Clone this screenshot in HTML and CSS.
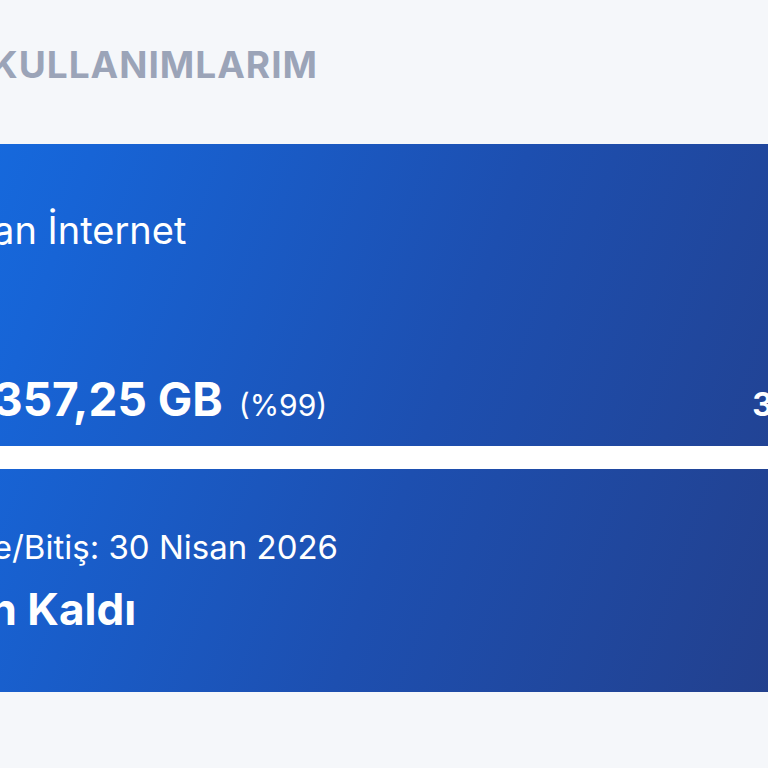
FILE: index.html
```html
<!DOCTYPE html>
<html lang="tr">
<head>
  <meta charset="UTF-8">
  <meta name="viewport" content="width=device-width, initial-scale=1.0">
  <title>Kullanımlarım</title>
  <link rel="stylesheet" href="styles.css">
</head>
<body>

  <div class="page">
    <h2 class="section-title">PAKET KULLANIMLARIM</h2>

    <div class="usage-card">
      <div class="usage-head">
        <span class="usage-icon"></span>
        <span class="usage-name">Kalan İnternet</span>
      </div>

      <div class="usage-amounts">
        <span class="amount-left">357,25 GB</span>
        <span class="amount-percent">(%99)</span>
        <span class="amount-total">360 GB</span>
      </div>

      <div class="progress">
        <div class="progress-fill" style="width: 99%"></div>
      </div>

      <div class="renew-date">Yenileme/Bitiş: 30 Nisan 2026</div>
      <div class="days-left">14 Gün Kaldı</div>
    </div>
  </div>

</body>
</html>
```

FILE: styles.css
```css
body {
  margin: 0;
  padding: 0;
  background-color: #f5f7fa;
  font-family: Inter, "Noto Sans", sans-serif;
  overflow: hidden;
  height: 768px;
}

.page {
  margin-left: -154px;
  width: 1046px;
}

.section-title {
  margin: 0;
  padding: 46px 0 0 8px;
  font-size: 37px;
  line-height: 37px;
  font-weight: 700;
  letter-spacing: 1px;
  color: #9ba4b8;
}

.usage-card {
  margin-top: 61px;
  padding: 67px 24px 61px;
  background: linear-gradient(110deg, #1470e6 0%, #1764d6 20%, #1d4fb0 55%, #243c84 100%);
  color: #fff;
}

.usage-head {
  display: flex;
  align-items: center;
  gap: 12px;
}

.usage-icon {
  width: 55px;
  height: 38px;
}

.usage-name {
  font-size: 38px;
  line-height: 38px;
  font-weight: 400;
}

.usage-amounts {
  display: flex;
  align-items: baseline;
  margin-top: 127px;
  padding-left: 123px;
}

.amount-left {
  font-size: 46px;
  line-height: 46px;
  font-weight: 700;
}

.amount-percent {
  margin-left: 16px;
  font-size: 30px;
  line-height: 30px;
}

.amount-total {
  margin-left: auto;
  font-size: 32px;
  line-height: 32px;
  font-weight: 700;
}

.progress {
  margin: 24px -24px 0;
  height: 23px;
  background-color: rgba(255, 255, 255, 0.3);
}

.progress-fill {
  height: 100%;
  background-color: #fff;
}

.renew-date {
  margin-top: 62px;
  font-size: 33px;
  line-height: 33px;
}

.days-left {
  margin-top: 23px;
  font-size: 44px;
  line-height: 44px;
  font-weight: 700;
}
```
